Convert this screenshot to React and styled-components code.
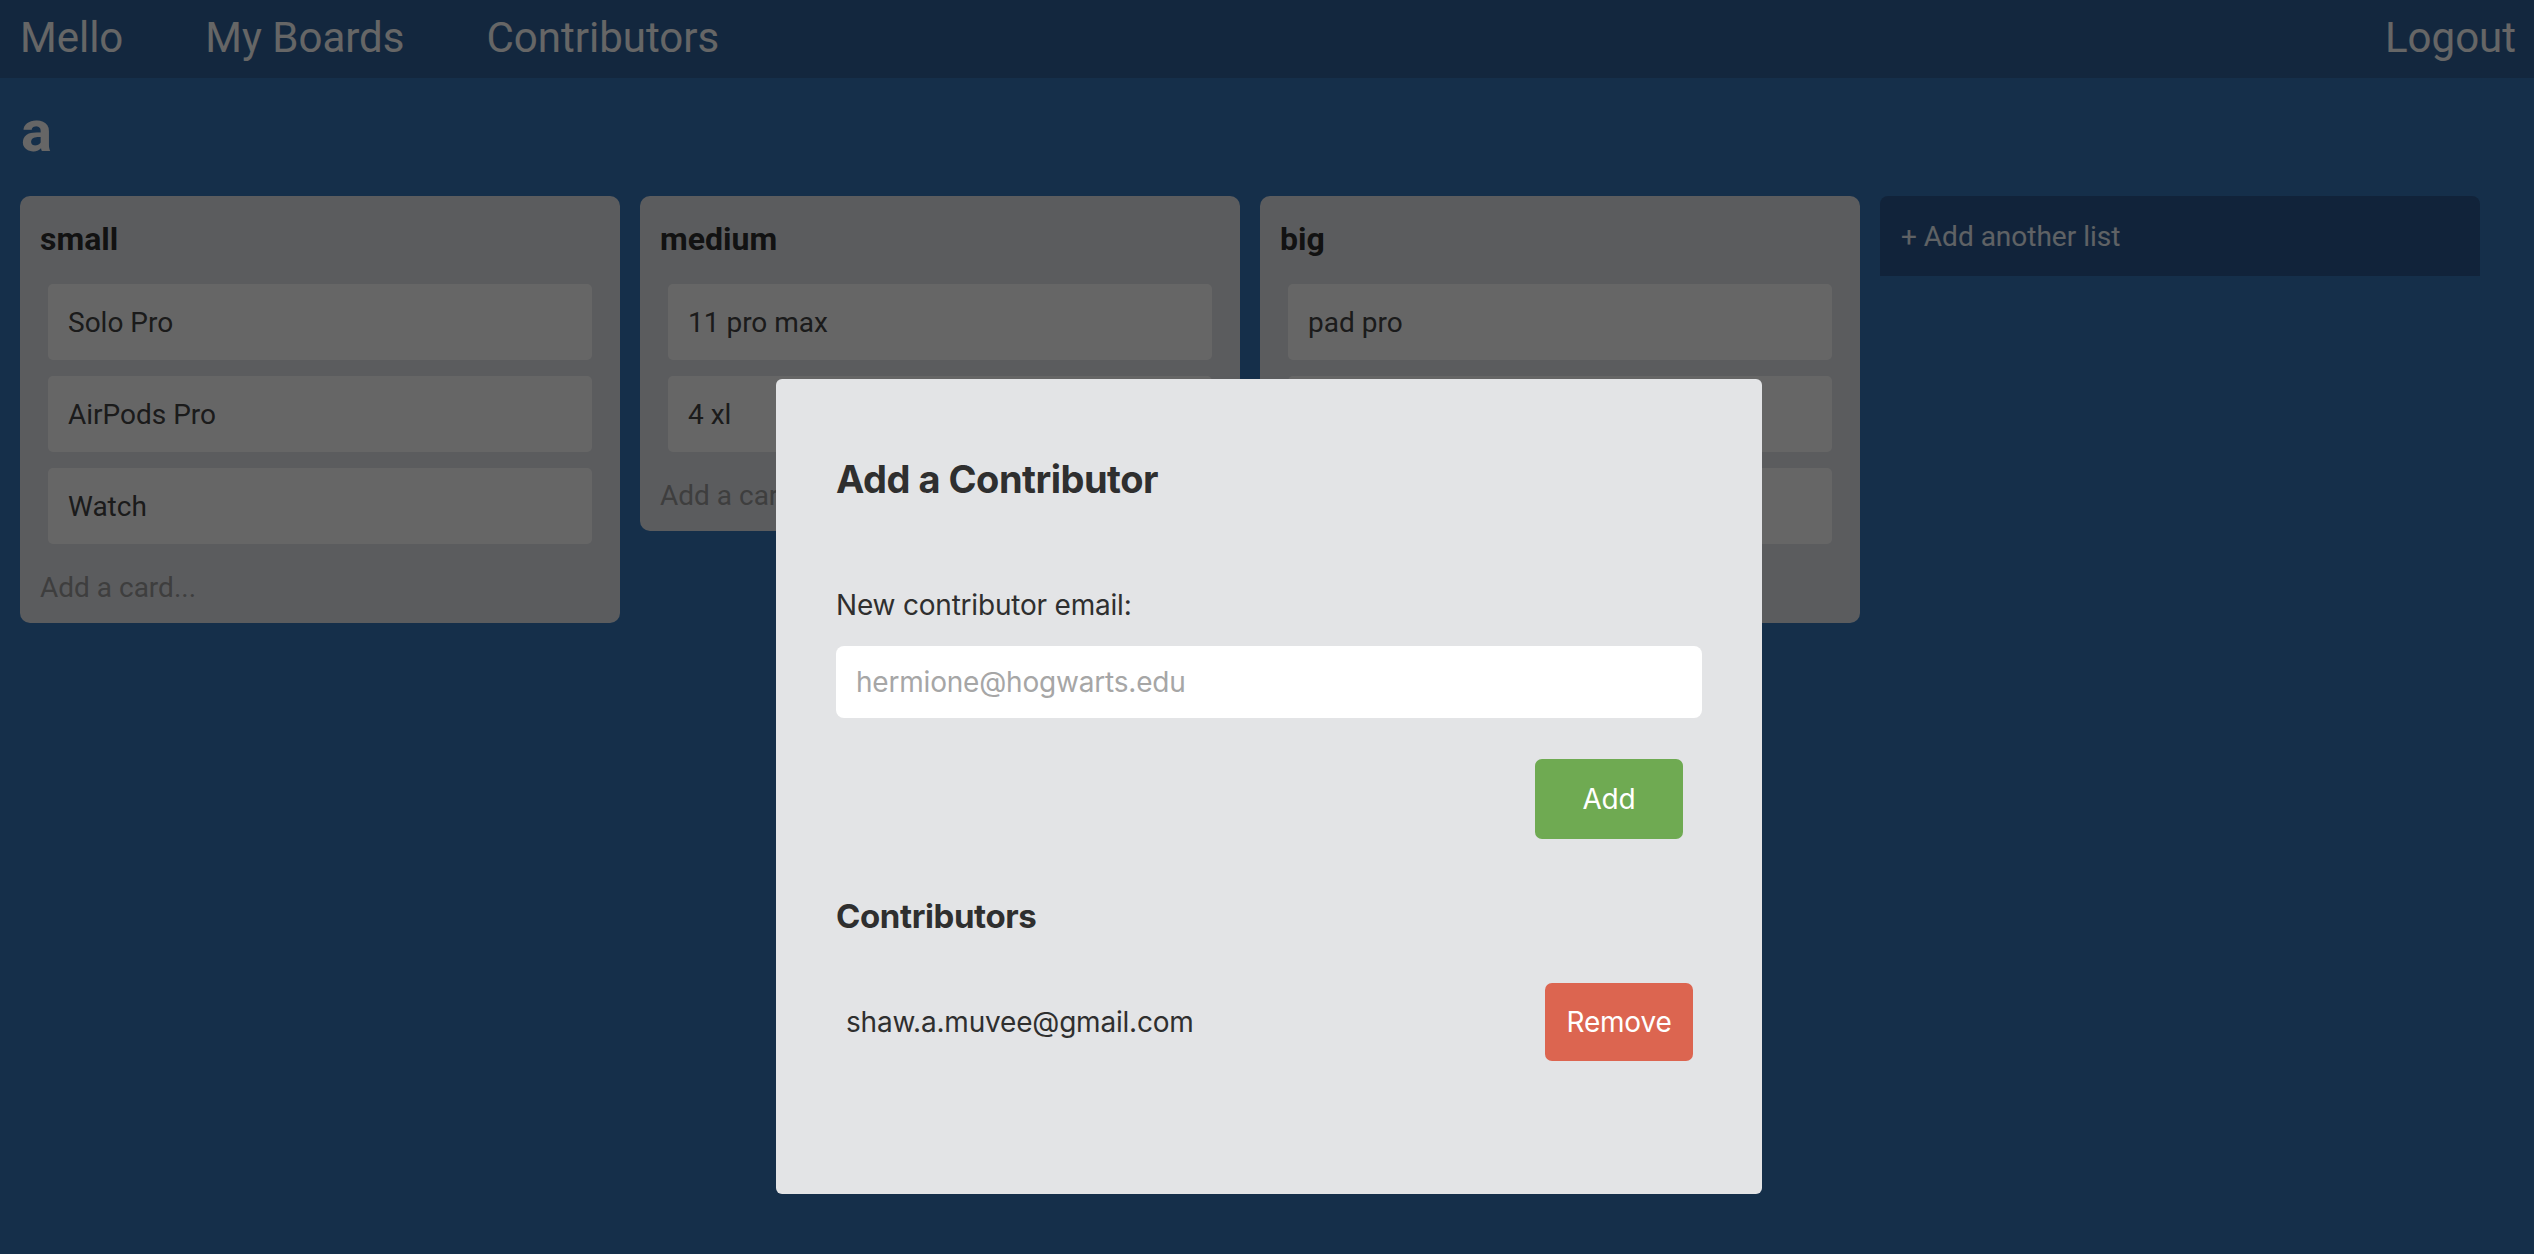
import React from "react";
import styled, { createGlobalStyle } from "styled-components";

const GlobalStyle = createGlobalStyle`
  html, body {
    margin: 0;
    padding: 0;
  }
  body {
    font-family: Roboto, "Liberation Sans", sans-serif;
    background: #3576b9;
  }
  * { box-sizing: border-box; }
`;

const Page = styled.div`
  min-height: 100vh;
  background: #3576b9;
  font-family: Roboto, "Liberation Sans", sans-serif;
`;

const Nav = styled.nav`
  height: 78px;
  background: #30629b;
  display: flex;
  align-items: center;
  padding: 0 18px 2px 20px;
`;

const NavLink = styled.a`
  color: #ffffff;
  font-size: 42px;
  line-height: 48px;
  text-decoration: none;
  margin-right: ${(p) => (p.$last ? "0" : "82px")};
  margin-left: ${(p) => (p.$right ? "auto" : "0")};
  cursor: pointer;
`;

const Board = styled.main`
  padding: 0 20px;
`;

const BoardTitle = styled.h1`
  margin: 24px 0 0 0;
  padding-left: 1px;
  font-size: 58px;
  line-height: 58px;
  font-weight: 700;
  color: #ffffff;
`;

const Lists = styled.div`
  display: flex;
  align-items: flex-start;
  gap: 20px;
  margin-top: 36px;
`;

const List = styled.section`
  width: 600px;
  flex: none;
  background: #e3e6eb;
  border-radius: 10px;
  padding: 24px 20px 18px 20px;
`;

const ListTitle = styled.h2`
  margin: 0;
  font-size: 32px;
  line-height: 38px;
  font-weight: 700;
  color: #2e2e2e;
`;

const Cards = styled.div`
  display: flex;
  flex-direction: column;
  gap: 16px;
  margin: 26px 8px 0 8px;
`;

const Card = styled.div`
  height: 76px;
  background: #ffffff;
  border-radius: 5px;
  display: flex;
  align-items: center;
  padding: 0 20px;
  font-size: 28px;
  color: #444444;
`;

const AddCard = styled.div`
  margin-top: 27px;
  font-size: 28px;
  line-height: 34px;
  color: #9b9b9b;
`;

const AddList = styled.div`
  width: 600px;
  flex: none;
  height: 80px;
  background: #2b5891;
  border-radius: 8px 8px 0 0;
  display: flex;
  align-items: center;
  padding: 0 21px;
  font-size: 28px;
  color: #eef4fc;
`;

const Overlay = styled.div`
  position: fixed;
  inset: 0;
  background: rgba(0, 0, 0, 0.6);
  display: flex;
  flex-direction: column;
  align-items: center;
  padding-top: 379px;
`;

const Modal = styled.div`
  width: 986px;
  background: #e3e4e6;
  border-radius: 6px;
  padding: 76px 60px 133px 60px;
  font-family: Inter, "Noto Sans", sans-serif;
  color: #2f2f2f;
  margin-left: 4px;
`;

const ModalTitle = styled.h2`
  margin: 0;
  font-size: 38px;
  line-height: 48px;
  font-weight: 700;
  letter-spacing: -0.5px;
`;

const Label = styled.label`
  display: block;
  margin-top: 85px;
  font-size: 28px;
  line-height: 34px;
  letter-spacing: -0.2px;
`;

const EmailInput = styled.input`
  display: block;
  width: 100%;
  height: 72px;
  margin-top: 24px;
  border: none;
  border-radius: 8px;
  background: #ffffff;
  padding: 0 20px;
  font-family: Inter, "Noto Sans", sans-serif;
  font-size: 28px;
  letter-spacing: -0.2px;
  color: #2f2f2f;
  outline: none;
  &::placeholder {
    color: #a6a6a6;
  }
`;

const ActionRow = styled.div`
  display: flex;
  justify-content: flex-end;
  padding-right: 19px;
  margin-top: 41px;
`;

const Button = styled.button`
  width: 148px;
  height: ${(p) => (p.$tall ? "80px" : "78px")};
  border: none;
  border-radius: 7px;
  background: ${(p) => p.$bg};
  color: #ffffff;
  font-family: Inter, "Noto Sans", sans-serif;
  font-size: 28px;
  letter-spacing: -0.2px;
  cursor: pointer;
`;

const SectionTitle = styled.h3`
  margin: 58px 0 0 0;
  font-size: 33px;
  line-height: 38px;
  font-weight: 700;
  letter-spacing: -0.4px;
`;

const ContributorRow = styled.div`
  display: flex;
  align-items: center;
  justify-content: space-between;
  padding: 0 9px 0 10px;
  margin-top: 48px;
`;

const ContributorEmail = styled.span`
  font-size: 28px;
  letter-spacing: -0.2px;
`;

const lists = [
  { title: "small", cards: ["Solo Pro", "AirPods Pro", "Watch"] },
  { title: "medium", cards: ["11 pro max", "4 xl"] },
  { title: "big", cards: ["pad pro", "mac pro", "pro display"] },
];

export default function App() {
  return (
    <>
      <GlobalStyle />
      <Page>
        <Nav>
          <NavLink>Mello</NavLink>
          <NavLink>My Boards</NavLink>
          <NavLink $last>Contributors</NavLink>
          <NavLink $right $last>Logout</NavLink>
        </Nav>
        <Board>
          <BoardTitle>a</BoardTitle>
          <Lists>
            {lists.map((l) => (
              <List key={l.title}>
                <ListTitle>{l.title}</ListTitle>
                <Cards>
                  {l.cards.map((c) => (
                    <Card key={c}>{c}</Card>
                  ))}
                </Cards>
                <AddCard>Add a card...</AddCard>
              </List>
            ))}
            <AddList>+ Add another list</AddList>
          </Lists>
        </Board>
        <Overlay>
          <Modal>
            <ModalTitle>Add a Contributor</ModalTitle>
            <Label htmlFor="email">New contributor email:</Label>
            <EmailInput id="email" placeholder="hermione@hogwarts.edu" />
            <ActionRow>
              <Button $bg="#6faa52" $tall>Add</Button>
            </ActionRow>
            <SectionTitle>Contributors</SectionTitle>
            <ContributorRow>
              <ContributorEmail>shaw.a.muvee@gmail.com</ContributorEmail>
              <Button $bg="#dc6550">Remove</Button>
            </ContributorRow>
          </Modal>
        </Overlay>
      </Page>
    </>
  );
}
